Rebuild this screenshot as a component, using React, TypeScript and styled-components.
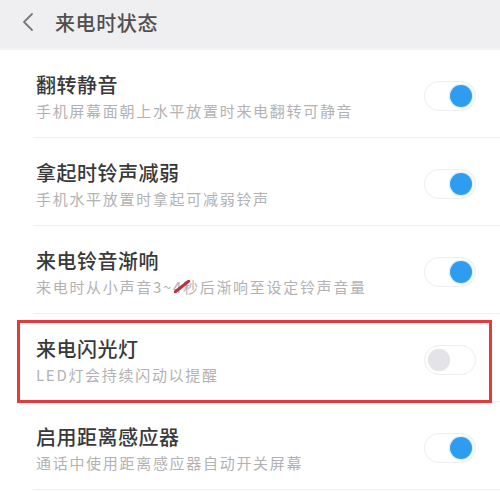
import React from 'react';
import styled, { createGlobalStyle } from 'styled-components';

const GlobalStyle = createGlobalStyle`
  body {
    margin: 0;
    background: #ffffff;
    font-family: "Noto Sans CJK SC", "Noto Sans", sans-serif;
  }
`;

const Page = styled.div`
  width: 500px;
  height: 492px;
  overflow: hidden;
  background: #ffffff;
`;

const Header = styled.header`
  height: 50px;
  display: flex;
  align-items: center;
  padding: 0 0 4px 22px;
  box-sizing: border-box;
  background: #efeef0;
  border-bottom: 2px solid #f4f4f5;
`;

const HeaderTitle = styled.h1`
  margin: 0 0 0 21px;
  font-size: 20px;
  font-weight: 500;
  color: #505050;
  letter-spacing: 0.6px;
`;

const List = styled.div`
  display: flex;
  flex-direction: column;
`;

const Row = styled.div<{ $highlight?: boolean }>`
  position: relative;
  height: 88px;
  padding-left: 33px;
  box-sizing: border-box;

  &::after {
    content: '';
    display: ${p => (p.$highlight ? 'block' : 'none')};
    position: absolute;
    left: 17px;
    right: 8px;
    top: 6px;
    bottom: -1px;
    border: 3px solid #e23b3b;
    pointer-events: none;
  }
`;

const RowBody = styled.div`
  height: 100%;
  display: flex;
  align-items: center;
  justify-content: space-between;
  padding: 5px 24px 0 3px;
  box-sizing: border-box;
  border-bottom: 1px solid #f0f0f1;
`;

const Texts = styled.div`
  display: flex;
  flex-direction: column;
  gap: 5px;
`;

const Title = styled.div`
  font-size: 20px;
  line-height: 24px;
  color: #393939;
  font-weight: 500;
  letter-spacing: 0.5px;
`;

const Sub = styled.div`
  position: relative;
  font-size: 15px;
  line-height: 18px;
  color: #b2b2b4;
  letter-spacing: 1.7px;
`;

const Scribble = styled.span`
  position: absolute;
  left: 136px;
  top: 7px;
  width: 20px;
  height: 3px;
  border-radius: 2px;
  background: #b8323f;
  transform: rotate(-38deg);
`;

const Track = styled.div<{ $on: boolean }>`
  position: relative;
  width: 52px;
  height: 30px;
  flex-shrink: 0;
  box-sizing: border-box;
  border-radius: 15px;
  background: #ffffff;
  border: 1px solid #ededee;
`;

const Knob = styled.div<{ $on: boolean }>`
  position: absolute;
  top: 3px;
  ${p => (p.$on ? 'right: 3px;' : 'left: 3px;')}
  width: 22px;
  height: 22px;
  border-radius: 50%;
  background: ${p => (p.$on ? '#2e9df0' : '#e4e3e8')};
  box-shadow: ${p => (p.$on ? '0 0 3px rgba(46,157,240,0.45)' : '0 0 2px rgba(0,0,0,0.06)')};
`;

const Toggle = ({ on }: { on: boolean }) => (
  <Track $on={on}>
    <Knob $on={on} />
  </Track>
);

const BackIcon = () => (
  <svg width="12" height="20" viewBox="0 0 12 20" fill="none">
    <path d="M10 2 L2 10 L10 18" stroke="#7a7a7c" strokeWidth="1.8" strokeLinecap="round" strokeLinejoin="round" />
  </svg>
);

const items = [
  { title: '翻转静音', sub: '手机屏幕面朝上水平放置时来电翻转可静音', on: true },
  { title: '拿起时铃声减弱', sub: '手机水平放置时拿起可减弱铃声', on: true },
  { title: '来电铃音渐响', sub: '来电时从小声音3~4秒后渐响至设定铃声音量', on: true, scribble: true },
  { title: '来电闪光灯', sub: 'LED灯会持续闪动以提醒', on: false, highlight: true },
  { title: '启用距离感应器', sub: '通话中使用距离感应器自动开关屏幕', on: true },
];

const App = () => (
  <Page>
    <GlobalStyle />
    <Header>
      <BackIcon />
      <HeaderTitle>来电时状态</HeaderTitle>
    </Header>
    <List>
      {items.map(item => (
        <Row key={item.title} $highlight={item.highlight}>
          <RowBody>
            <Texts>
              <Title>{item.title}</Title>
              <Sub>
                {item.sub}
                {item.scribble && <Scribble />}
              </Sub>
            </Texts>
            <Toggle on={item.on} />
          </RowBody>
        </Row>
      ))}
    </List>
  </Page>
);

export default App;
